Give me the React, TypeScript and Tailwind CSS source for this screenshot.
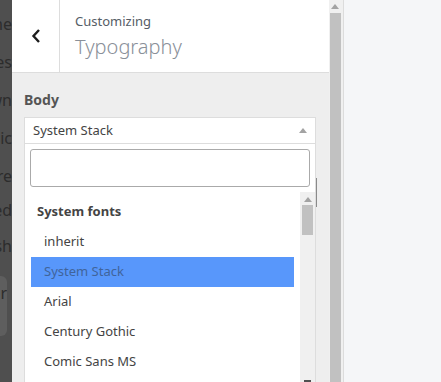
import React from 'react'

const sideItems = [
  { label: 'Home', top: 'mt-[14px]' },
  { label: 'Features', top: 'mt-[18px]' },
  { label: 'Down', top: 'mt-[18px]' },
  { label: 'Music', top: 'mt-[18px]' },
  { label: 'Feature', top: 'mt-[18px]' },
  { label: 'Selected', top: 'mt-[14px]' },
  { label: 'Finish', top: 'mt-[16px]' },
]

const fonts = ['inherit', 'System Stack', 'Arial', 'Century Gothic', 'Comic Sans MS']

const Arrow = ({ className }: { className?: string }) => (
  <svg width="8" height="5" viewBox="0 0 8 5" className={className}>
    <path d="M0 5 L4 0 L8 5 Z" fill="#a3a3a3" />
  </svg>
)

const App = () => {
  return (
    <div className="w-[441px] h-[382px] flex overflow-hidden bg-[#f5f6f8] font-['Noto_Sans','Open_Sans',sans-serif]">
      {/* dimmed admin menu behind */}
      <div className="w-[12px] shrink-0 bg-[#4f4f4f] flex flex-col text-[16px] leading-[20px] text-[#2c2c2c]">
        {sideItems.map((item) => (
          <div key={item.label} className={`${item.top} flex justify-end overflow-hidden whitespace-nowrap h-[20px]`}>
            {item.label}
          </div>
        ))}
        <div className="mt-[20px] w-[7px] h-[60px] rounded-r-[6px] bg-[#5e5e5e] flex justify-end overflow-hidden whitespace-nowrap pt-[7px] leading-[20px]">
          Other
        </div>
      </div>

      {/* customizer panel */}
      <div className="w-[317px] shrink-0 bg-[#eeeeee] flex flex-col relative">
        <div className="h-[73px] shrink-0 bg-white border-b border-[#dddddd] flex">
          <div className="w-[48px] border-r border-[#dddddd] flex items-center justify-center">
            <svg width="10" height="16" viewBox="0 0 10 16">
              <path d="M8 2 L2.5 8 L8 14" stroke="#1d1d1d" strokeWidth="2.4" fill="none" />
            </svg>
          </div>
          <div className="pl-[15px] pt-[12px]">
            <div className="text-[13px] leading-[18px] text-[#555d66]">Customizing</div>
            <div className="mt-[4px] text-[20px] leading-[26px] font-light text-[#8a9099]">Typography</div>
          </div>
        </div>

        <div className="px-[12px] pt-[17px]">
          <div className="text-[14px] leading-[20px] font-bold text-[#555555]">Body</div>
          <div className="mt-[7px] w-[292px] bg-white border border-[#dddddd]">
            <div className="h-[26px] flex items-center justify-between pl-[8px] pr-[8px] border-b border-[#dddddd]">
              <span className="text-[13px] text-[#444444]">System Stack</span>
              <Arrow />
            </div>
            <div className="p-[5px] pb-[5px]">
              <div className="h-[38px] border border-[#aaaaaa] rounded-[3px]" />
            </div>
            <div className="h-[190px] flex">
              <div className="flex-1 pl-[6px] pr-[6px]">
                <div className="h-[35px] pt-[9px] pl-[6px] text-[13px] leading-[20px] font-bold text-[#444444]">
                  System fonts
                </div>
                {fonts.map((f) => (
                  <div
                    key={f}
                    className={`h-[30px] pl-[13px] flex items-center text-[13px] ${
                      f === 'System Stack' ? 'bg-[#5897fb] text-[#40649a]' : 'text-[#444444]'
                    }`}
                  >
                    {f}
                  </div>
                ))}
              </div>
              <div className="w-[15px] bg-[#f0f0f0] flex flex-col items-center">
                <Arrow className="mt-[5px]" />
                <div className="mt-[3px] w-[11px] h-[30px] bg-[#c1c1c1]" />
                <div className="mt-auto w-[7px] h-[2px] bg-[#505050]" />
              </div>
            </div>
          </div>
        </div>
        <div className="absolute left-[304px] top-[178px] w-[1px] h-[29px] bg-[#8a8a8a]" />
      </div>

      {/* outer scrollbar */}
      <div className="w-[15px] shrink-0 bg-[#f0f0f0] border-r border-[#dcdcdc] flex flex-col items-center">
        <Arrow className="mt-[4px] -ml-[3px]" />
        <div className="mt-[4px] mr-[2px] w-[11px] flex-1 bg-[#c1c1c1]" />
      </div>

      <div className="flex-1" />
    </div>
  )
}

export default App
